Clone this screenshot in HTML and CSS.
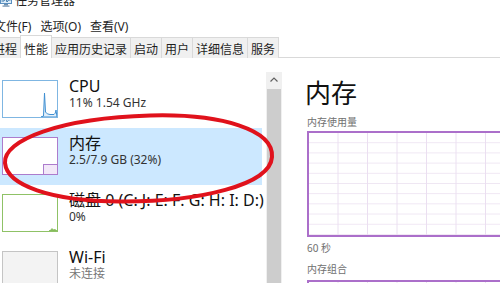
FILE: index.html
```html
<!DOCTYPE html>
<html lang="zh-CN">
<head>
<meta charset="utf-8">
<title>任务管理器</title>
<link rel="stylesheet" href="styles.css">
</head>
<body>
<div class="app">
  <div class="titlebar">
    <svg class="app-icon" width="12" height="14" viewBox="0 0 12 14">
      <rect x="0.5" y="0.5" width="11" height="9" fill="#dcecf8" stroke="#5a8fc0"/>
      <polyline points="1.5,7 4,7 5.5,4 7,8 8.5,6 10.5,6" fill="none" stroke="#2e6da4" stroke-width="0.9"/>
      <rect x="4" y="10" width="4" height="1.5" fill="#6f8fae"/>
      <rect x="2.5" y="11.5" width="7" height="1.2" fill="#6f8fae"/>
    </svg>
    <span class="app-title">任务管理器</span>
  </div>
  <div class="menubar">
    <span class="menu-item">文件(F)</span>
    <span class="menu-item">选项(O)</span>
    <span class="menu-item">查看(V)</span>
  </div>
  <div class="tabs">
    <span class="tab">进程</span>
    <span class="tab tab-active">性能</span>
    <span class="tab">应用历史记录</span>
    <span class="tab">启动</span>
    <span class="tab">用户</span>
    <span class="tab">详细信息</span>
    <span class="tab">服务</span>
  </div>
  <div class="main">
    <div class="sidebar">
      <div class="list">
        <div class="item">
          <div class="thumb thumb-cpu">
            <svg width="54" height="36" viewBox="0 0 54 36">
              <path d="M38 36 L40.5 35 L41.5 12 L42.5 31 Q44 33.5 47 33.5 L51 33.5 Q52.5 33 53 29 L54 36 Z" fill="#e3f0fa" stroke="#3f8fd2" stroke-width="1"/>
            </svg>
          </div>
          <div class="item-text">
            <div class="item-title">CPU</div>
            <div class="item-sub">11% 1.54 GHz</div>
          </div>
        </div>
        <div class="item item-selected">
          <div class="thumb thumb-mem">
            <div class="mem-fill"></div>
          </div>
          <div class="item-text">
            <div class="item-title">内存</div>
            <div class="item-sub">2.5/7.9 GB (32%)</div>
          </div>
        </div>
        <div class="item">
          <div class="thumb thumb-disk">
            <svg width="54" height="36" viewBox="0 0 54 36">
              <path d="M46 36 L48 35 L49 33.5 L50 35 L52 34.5 L54 36 Z" fill="#8cc063" stroke="#7db653" stroke-width="0.8"/>
            </svg>
          </div>
          <div class="item-text">
            <div class="item-title">磁盘 0 (C: J: E: F: G: H: I: D:)</div>
            <div class="item-sub">0%</div>
          </div>
        </div>
        <div class="item">
          <div class="thumb thumb-wifi"></div>
          <div class="item-text">
            <div class="item-title">Wi-Fi</div>
            <div class="item-sub item-sub-muted">未连接</div>
          </div>
        </div>
      </div>
      <div class="scrollbar">
        <div class="scroll-arrow">
          <svg width="16" height="17" viewBox="0 0 16 17">
            <polyline points="4.5,9.5 8,6 11.5,9.5" fill="none" stroke="#606060" stroke-width="1.2"/>
          </svg>
        </div>
        <div class="scroll-thumb"></div>
      </div>
    </div>
    <div class="detail">
      <div class="detail-title">内存</div>
      <div class="detail-label">内存使用量</div>
      <div class="graph"></div>
      <div class="detail-label detail-time">60 秒</div>
      <div class="detail-label detail-comp">内存组合</div>
      <div class="graph graph-comp"></div>
    </div>
  </div>
</div>
<svg class="annotation" width="500" height="283" viewBox="0 0 500 283">
  <path d="M5 163 C 3 140, 60 118, 150 115.5 C 222 113.5, 274 130, 272 157 C 270 185, 200 202, 120 201.5 C 50 201, 7 185, 5 163 Z" fill="none" stroke="#e0121c" stroke-width="4"/>
</svg>
</body>
</html>
```
FILE: styles.css
```css
* { box-sizing: border-box; }

html, body {
  margin: 0;
  padding: 0;
}

body {
  width: 500px;
  height: 283px;
  overflow: hidden;
  position: relative;
  background: #ffffff;
  font-family: "Noto Sans", "Noto Sans CJK SC", sans-serif;
  color: #1a1a1a;
}

.app {
  margin-top: -6px;
  display: flex;
  flex-direction: column;
}

.titlebar {
  height: 14px;
  display: flex;
  align-items: center;
  gap: 3px;
  overflow: hidden;
}

.app-icon { flex: none; }

.app-title {
  font-size: 12px;
  line-height: 14px;
  color: #222;
}

.menubar {
  display: flex;
  gap: 9px;
  padding-top: 12px;
  margin-left: -6px;
}

.menu-item {
  font-size: 12px;
  line-height: 14px;
  color: #1e1e1e;
}

.tabs {
  display: flex;
  margin-top: 3px;
  margin-left: -10px;
  height: 21px;
  border-bottom: 1px solid #d9d9d9;
}

.tab {
  display: block;
  height: 21px;
  padding: 5px 3px 0;
  font-size: 12px;
  line-height: 14px;
  color: #1e1e1e;
  background: #f0f0f0;
  border-top: 1px solid #d9d9d9;
  border-right: 1px solid #d9d9d9;
}

.tab-active {
  background: #ffffff;
  height: 23px;
  margin-top: -2px;
  padding-top: 7px;
  border-left: 1px solid #d9d9d9;
  margin-left: -1px;
  position: relative;
  z-index: 1;
}

.main {
  display: flex;
  height: 240px;
}

.sidebar {
  width: 282px;
  flex: none;
  display: flex;
}

.list {
  width: 266px;
  padding: 13px 4px 0 0;
  display: flex;
  flex-direction: column;
}

.item {
  height: 57px;
  flex: none;
  display: flex;
  align-items: flex-start;
  padding-left: 2px;
}

.item-selected {
  background: #cce8ff;
}

.thumb {
  width: 56px;
  height: 38px;
  margin-top: 9px;
  flex: none;
  border: 1px solid #ccc;
  background: #fff;
  position: relative;
}

.thumb svg { display: block; }

.thumb-cpu { border-color: #7fb6e2; }

.thumb-mem { border-color: #ac7ccd; }

.mem-fill {
  position: absolute;
  right: 0;
  bottom: 0;
  width: 14px;
  height: 10px;
  background: #f2e8f8;
  border-top: 1px solid #ac7ccd;
  border-left: 1px solid #ac7ccd;
}

.thumb-disk { border-color: #8fc266; }

.thumb-wifi {
  border-color: #c4c4c4;
  background: #f3f3f3;
}

.item-text {
  margin-left: 11px;
  margin-top: 5px;
  white-space: nowrap;
}

.item-title {
  font-size: 16px;
  line-height: 20px;
  color: #111;
}

.item-sub {
  font-size: 12px;
  line-height: 14px;
  color: #333;
}

.item-sub-muted { color: #777; }

.scrollbar {
  width: 16px;
  flex: none;
  margin-top: 14px;
  background: #f0f0f0;
  display: flex;
  flex-direction: column;
}

.scroll-arrow {
  height: 17px;
  flex: none;
}

.scroll-arrow svg { display: block; }

.scroll-thumb {
  flex: 1;
  margin: 0 1px;
  background: #cdcdcd;
}

.detail {
  flex: 1;
  padding: 19px 0 0 25px;
  display: flex;
  flex-direction: column;
  overflow: hidden;
}

.detail-title {
  font-size: 26px;
  line-height: 32px;
  margin-left: -2px;
  color: #111;
}

.detail-label {
  font-size: 10px;
  line-height: 12px;
  color: #707070;
  margin-top: 7px;
}

.graph {
  margin-top: 3px;
  width: 260px;
  height: 106px;
  flex: none;
  border: 2px solid #ab6fca;
  background-color: #fff;
  background-image:
    linear-gradient(to right, transparent 28.5px, #ebdff1 28.5px, #ebdff1 29.5px),
    linear-gradient(to bottom, transparent 9.2px, #efe6f3 9.2px, #efe6f3 10.2px);
  background-size: 29.5px 100%, 100% 10.2px;
}

.detail-time { margin-top: 5px; }

.detail-comp { margin-top: 9px; }

.graph-comp {
  margin-top: 5px;
  height: 40px;
}

.annotation {
  position: absolute;
  left: 0;
  top: 0;
  pointer-events: none;
}
```
